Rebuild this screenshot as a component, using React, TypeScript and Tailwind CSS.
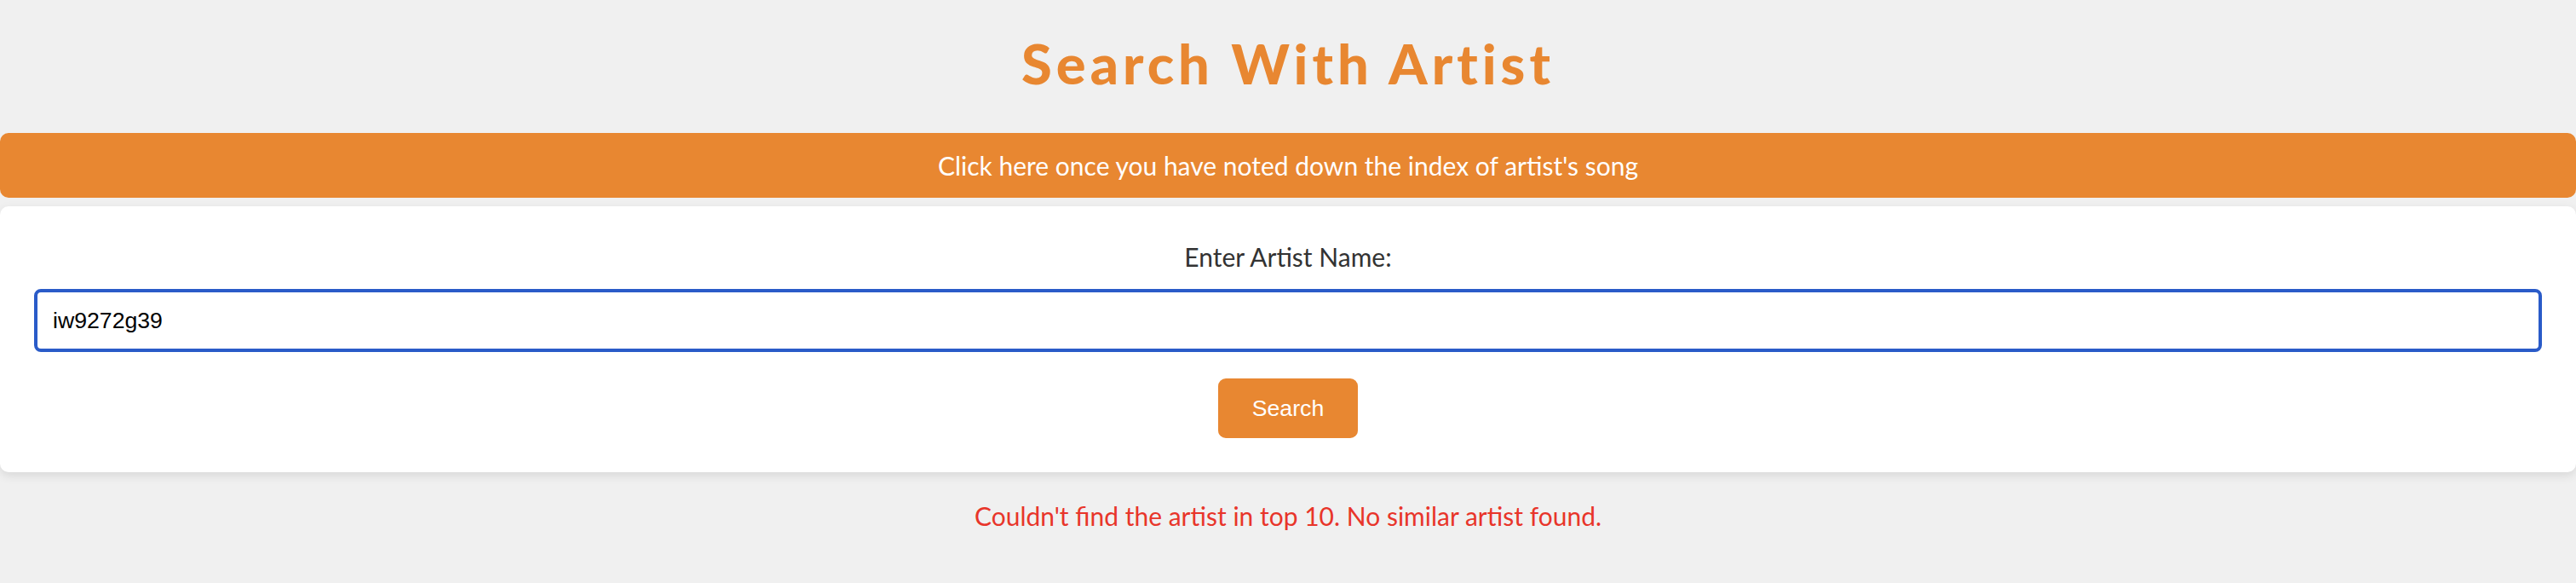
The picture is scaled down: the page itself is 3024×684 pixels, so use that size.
import { useState } from "react"

const gill = { fontFamily: "Lato, 'Open Sans', sans-serif" }
const arial = { fontFamily: "'Liberation Sans', Arial, sans-serif" }

export default function App() {
  const [artist, setArtist] = useState("iw9272g39")

  return (
    <div className="min-h-screen bg-[#f0f0f0] text-[#333]" style={gill}>
      <h1 className="pt-[34px] pb-[42px] text-center text-[65px] font-black leading-[80px] tracking-[5px] text-[#e88731]">
        Search With Artist
      </h1>

      <button className="block h-[76px] w-full rounded-[10px] bg-[#e88731] text-center text-[30px] text-white">
        Click here once you have noted down the index of artist's song
      </button>

      <div className="mt-[10px] flex flex-col items-center rounded-[10px] bg-white px-[40px] pt-[40px] pb-[40px] shadow-[0_4px_12px_rgba(0,0,0,0.1)]">
        <label htmlFor="artist" className="text-[30px] leading-[38px] text-[#333]">
          Enter Artist Name:
        </label>
        <input
          id="artist"
          autoFocus
          value={artist}
          onChange={(e) => setArtist(e.target.value)}
          className="mt-[19px] h-[74px] w-full rounded-[8px] border-[4px] border-[#2a5bc8] bg-white px-[18px] text-[26.67px] text-black caret-black outline-none"
          style={arial}
        />
        <button className="mt-[31px] h-[70px] rounded-[9px] bg-[#e88731] px-[40px] text-[26.67px] text-white" style={arial}>
          Search
        </button>
      </div>

      <p className="mt-[32px] text-center text-[30px] leading-[38px] text-[#e8352a]">
        Couldn't find the artist in top 10. No similar artist found.
      </p>
    </div>
  )
}
